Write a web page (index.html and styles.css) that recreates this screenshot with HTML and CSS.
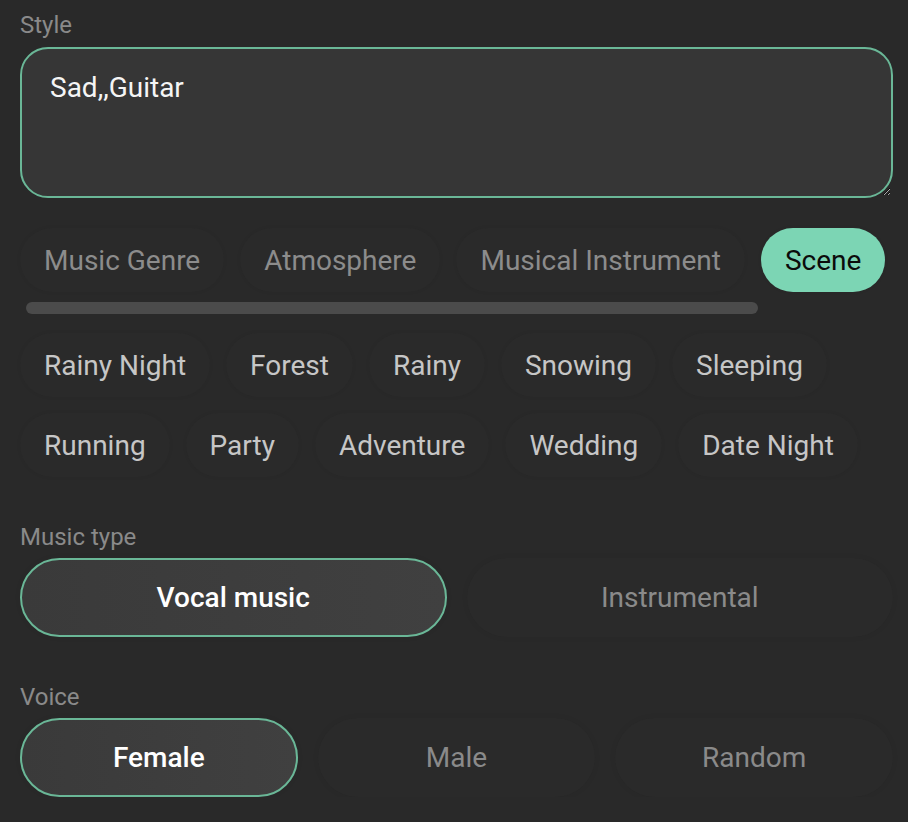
FILE: index.html
```html
<!DOCTYPE html>
<html lang="en">

<head>
    <meta charset="UTF-8">
    <meta name="viewport" content="width=device-width, initial-scale=1.0">
    <title>Create Music</title>
    <link rel="stylesheet" href="styles.css">
</head>

<body>
    <div class="container">
        <!-- Style prompt -->
        <label class="field-label" for="style">Style</label>
        <textarea id="style" class="style-input">Sad,,Guitar</textarea>

        <!-- Category tabs -->
        <div class="tabs">
            <button class="tab">Music Genre</button>
            <button class="tab">Atmosphere</button>
            <button class="tab">Musical Instrument</button>
            <button class="tab active">Scene</button>
        </div>
        <div class="scroll-thumb"></div>

        <!-- Tags -->
        <div class="chips">
            <div class="chip-row">
                <button class="chip">Rainy Night</button>
                <button class="chip">Forest</button>
                <button class="chip">Rainy</button>
                <button class="chip">Snowing</button>
                <button class="chip">Sleeping</button>
            </div>
            <div class="chip-row">
                <button class="chip">Running</button>
                <button class="chip">Party</button>
                <button class="chip">Adventure</button>
                <button class="chip">Wedding</button>
                <button class="chip">Date Night</button>
            </div>
        </div>

        <!-- Music type -->
        <div class="section">
            <div class="field-label">Music type</div>
            <div class="options two">
                <button class="option selected">Vocal music</button>
                <button class="option">Instrumental</button>
            </div>
        </div>

        <!-- Voice -->
        <div class="section">
            <div class="field-label">Voice</div>
            <div class="options three">
                <button class="option selected">Female</button>
                <button class="option">Male</button>
                <button class="option">Random</button>
            </div>
        </div>
    </div>
</body>

</html>
```

FILE: styles.css
```css
/* Basic Reset */
* {
    margin: 0;
    padding: 0;
    box-sizing: border-box;
}

body {
    font-family: 'Roboto', 'Liberation Sans', sans-serif;
    background-color: #292929;
    color: #fff;
}

.container {
    padding: 11px 15px 0 20px;
}

button {
    font-family: inherit;
    border: none;
    cursor: pointer;
}

/* Labels */
.field-label {
    display: block;
    font-size: 24px;
    line-height: 28px;
    color: #8a8a8a;
    margin-bottom: 7px;
}

label.field-label {
    margin-bottom: 8px;
}

/* Style textarea */
.style-input {
    display: block;
    width: 100%;
    height: 151px;
    padding: 21px 28px;
    font-family: inherit;
    font-size: 28px;
    line-height: 36px;
    color: #f5f5f5;
    background-color: #363636;
    border: 2px solid #6ab797;
    border-radius: 28px;
    outline: none;
    resize: vertical;
}

/* Tabs */
.tabs {
    display: flex;
    gap: 16px;
    margin-top: 30px;
}

.tab {
    height: 64px;
    padding: 0 24px;
    border-radius: 32px;
    font-size: 28px;
    color: #8c8c8c;
    background-color: #2a2a2a;
    box-shadow: 0 0 4px rgba(0, 0, 0, 0.05);
    white-space: nowrap;
}

.tab.active {
    background-color: #7cd5b4;
    color: #0b0b0b;
}

.scroll-thumb {
    width: 732px;
    height: 12px;
    margin: 10px 0 0 6px;
    border-radius: 6px;
    background-color: #4b4b4b;
}

/* Chips */
.chips {
    display: flex;
    flex-direction: column;
    gap: 16px;
    margin-top: 19px;
}

.chip-row {
    display: flex;
    gap: 16px;
}

.chip {
    height: 64px;
    padding: 0 24px;
    border-radius: 32px;
    font-size: 28px;
    color: #c6c6c6;
    background-color: #2a2a2a;
    box-shadow: 0 0 4px rgba(0, 0, 0, 0.05);
    white-space: nowrap;
}

/* Option groups */
.section {
    margin-top: 46px;
}

.options {
    display: grid;
    gap: 20px;
}

.options.two {
    grid-template-columns: repeat(2, 1fr);
}

.options.three {
    grid-template-columns: repeat(3, 1fr);
}

.option {
    height: 79px;
    border-radius: 40px;
    font-size: 28px;
    color: #8a8a8a;
    background-color: #2a2a2a;
    box-shadow: 0 0 6px rgba(0, 0, 0, 0.06);
}

.option.selected {
    font-weight: 500;
    color: #fff;
    background: linear-gradient(90deg, #3a3a3a, #404040);
    border: 2px solid #6ab797;
}
```
